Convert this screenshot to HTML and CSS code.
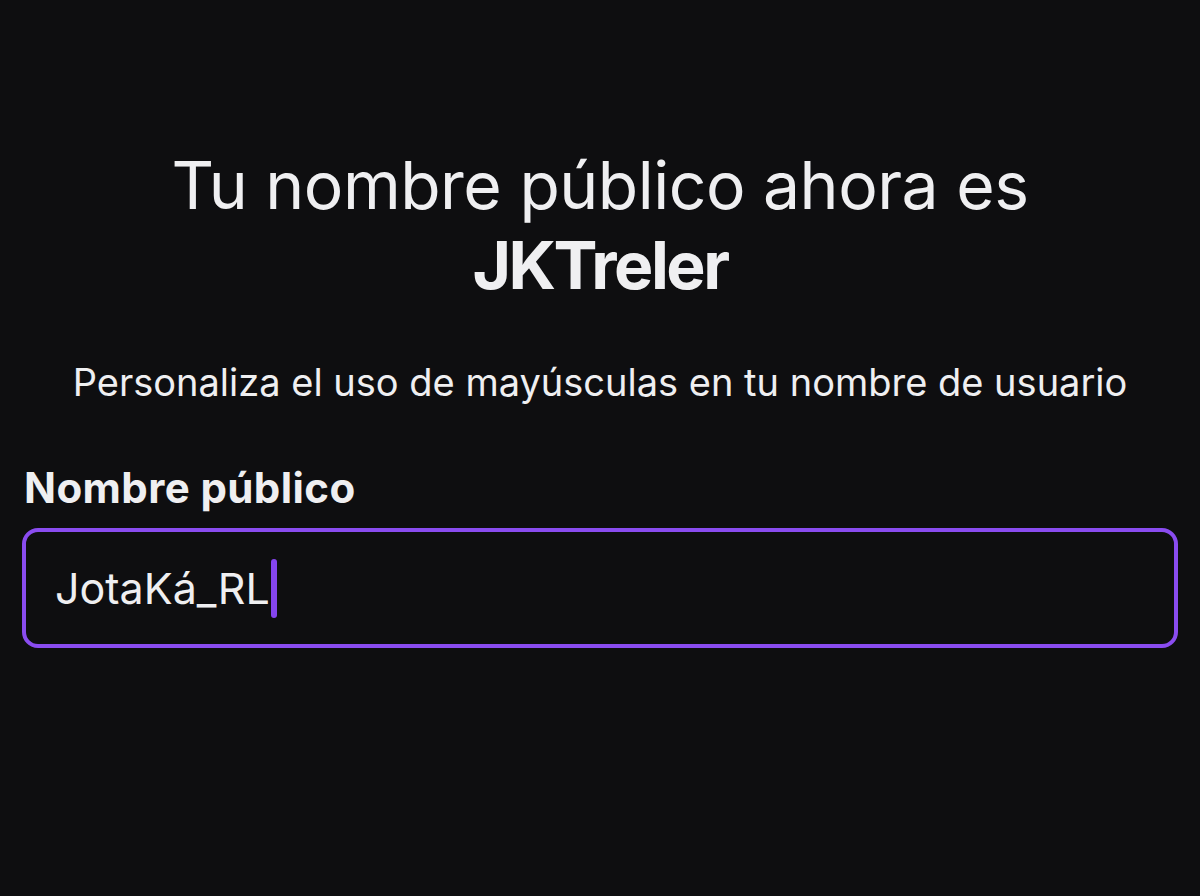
FILE: index.html
```html
<!DOCTYPE html>
<html lang="es">
<head>
<meta charset="utf-8">
<title>Nombre público</title>
<link rel="stylesheet" href="styles.css">
</head>
<body>
<main class="page">
  <h1 class="title">Tu nombre público ahora es<br><strong class="name">JKTreler</strong></h1>
  <p class="subtitle">Personaliza el uso de mayúsculas en tu nombre de usuario</p>
  <label class="label" for="pub">Nombre público</label>
  <div class="field">
    <span class="value" id="pub">JotaKá_RL</span><span class="caret"></span>
  </div>
</main>
</body>
</html>
```
FILE: styles.css
```css
html, body {
  margin: 0;
  padding: 0;
  background: #0e0e10;
  height: 100%;
}
body {
  color: #efeff1;
  font-family: Inter, "Noto Sans", sans-serif;
}
.page {
  padding: 145px 22px 0;
  display: flex;
  flex-direction: column;
}
.title {
  margin: 0;
  text-align: center;
  font-weight: 400;
  font-size: 66px;
  line-height: 80px;
  letter-spacing: -0.5px;
}
.name {
  font-weight: 700;
  letter-spacing: -2.5px;
}
.subtitle {
  margin: 54px 0 0;
  text-align: center;
  font-size: 38px;
  line-height: 46px;
}
.label {
  margin-top: 58px;
  padding-left: 2px;
  font-size: 42px;
  line-height: 50px;
  font-weight: 700;
  letter-spacing: 0.4px;
}
.field {
  box-sizing: border-box;
  margin-top: 15px;
  height: 120px;
  border: 4px solid #8a4cf0;
  border-radius: 16px;
  display: flex;
  align-items: center;
  padding-left: 29px;
}
.value {
  font-size: 43px;
  line-height: 52px;
}
.caret {
  width: 6px;
  height: 59px;
  border-radius: 3px;
  background: #8545ee;
  margin-left: 1px;
}
```
